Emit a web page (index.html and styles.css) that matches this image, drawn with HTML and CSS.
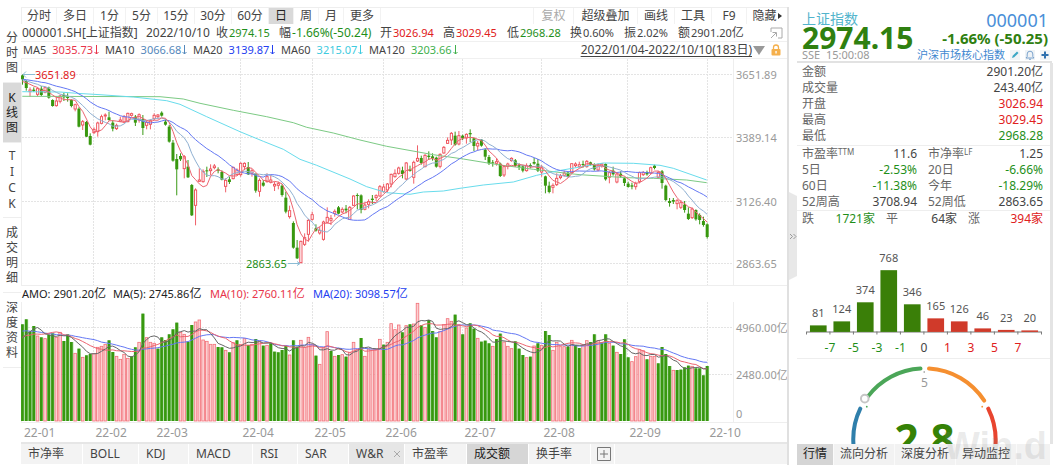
FILE: index.html
```html
<!DOCTYPE html>
<html lang="zh-CN">
<head>
<meta charset="utf-8">
<meta name="viewport" content="width=device-width, initial-scale=1">
<title>上证指数 000001.SH</title>
<link rel="stylesheet" href="styles.css">
</head>
<body>
<div class="app">
  <nav class="views">
    <button>分<br>时<br>图</button>
    <button class="on">K<br>线<br>图</button>
    <button class="tick">T<br>I<br>C<br>K</button>
    <button>成<br>交<br>明<br>细</button>
    <button>深<br>度<br>资<br>料</button>
  </nav>

  <main class="chart">
    <div class="toolbar">
      <button class="w35">分时</button><button class="w37">多日</button><button class="w32">1分</button><button class="w32">5分</button><button class="w37">15分</button><button class="w37">30分</button><button class="w37">60分</button><button class="w25 on">日</button><button class="w25">周</button><button class="w25">月</button><button class="w37">更多</button>
      <span class="spacer"></span>
      <button class="w40 off">复权</button><button class="w64">超级叠加</button><button class="w37">画线</button><button class="w37">工具</button><button class="w35">F9</button><button class="w40 hide">隐藏<i class="caret"></i></button>
    </div>

    <div class="quote">
      <span>000001.SH[上证指数]</span>
      <span>2022/10/10</span>
      <span>收<b class="dn">2974.15</b></span>
      <span>幅<b class="dn wide">-1.66%(-50.24)</b></span>
      <span>开<b class="up">3026.94</b></span>
      <span>高<b class="up">3029.45</b></span>
      <span>低<b class="dn">2968.28</b></span>
      <span>换<b>0.60%</b></span>
      <span>振<b>2.02%</b></span>
      <span>额<b>2901.20</b>亿</span>
      <button class="pop" aria-label="弹出"><svg width="13" height="12" viewBox="0 0 13 12"><path d="M1 5V1h11v10H8M1 11l5-5M2.500 5.500H6.500V9.500" fill="none" stroke="#aaa"/></svg></button>
    </div>

    <div class="ma">
      <span class="c5"><b>MA5</b><b class="v">3035.73<svg class="arr" viewBox="0 0 5 10"><path d="M2.500 0V9M.5 7l2 2 2-2"/></svg></b></span>
      <span class="c10"><b>MA10</b><b class="v">3066.68<svg class="arr" viewBox="0 0 5 10"><path d="M2.500 0V9M.5 7l2 2 2-2"/></svg></b></span>
      <span class="c20"><b>MA20</b><b class="v">3139.87<svg class="arr" viewBox="0 0 5 10"><path d="M2.500 0V9M.5 7l2 2 2-2"/></svg></b></span>
      <span class="c60"><b>MA60</b><b class="v">3215.07<svg class="arr" viewBox="0 0 5 10"><path d="M2.500 0V9M.5 7l2 2 2-2"/></svg></b></span>
      <span class="c120"><b>MA120</b><b class="v">3203.66<svg class="arr" viewBox="0 0 5 10"><path d="M2.500 0V9M.5 7l2 2 2-2"/></svg></b></span>
      <a class="range" href="#">2022/01/04-2022/10/10(183日)</a>
      <i class="tri"></i>
      <svg class="lock" width="10" height="12" viewBox="0 0 10 12"><path d="M2.500 6V3.500a2.500 2.500 0 0 1 5 0V6" fill="none" stroke="#f5b04c" stroke-width="1.300"/><rect x="0.500" y="5" width="9" height="6.500" rx="1" fill="#f5b04c"/><rect x="4.400" y="7" width="1.300" height="2.500" fill="#fff"/></svg>
    </div>

    <svg class="pane" id="price" viewBox="21 59 766 226" role="img" aria-label="K线"></svg>

    <div class="amo">
      <span>AMO: 2901.20<i>亿</i></span>
      <span>MA(5): 2745.86<i>亿</i></span>
      <span class="red">MA(10): 2760.11<i>亿</i></span>
      <span class="blue">MA(20): 3098.57<i>亿</i></span>
    </div>

    <svg class="pane" id="volume" viewBox="21 302 766 140" role="img" aria-label="成交额"></svg>

    <div class="indicators">
      <button class="n62">市净率</button><button class="n56">BOLL</button><button class="n49">KDJ</button><button class="n64">MACD</button><button class="n45">RSI</button><button class="n51">SAR</button><button class="n56 soft">W&amp;R<svg width="8" height="8" viewBox="0 0 8 8"><path d="M1 1l6 6M7 1L1 7" stroke="#aaa"/></svg></button><button class="n62">市盈率</button><button class="n62 on">成交额</button><button class="n62">换手率</button><button class="add" aria-label="添加"><svg width="14" height="14" viewBox="0 0 14 14"><path d="M.5.5h13v13H.5zM7 3v8M3 7h8" fill="none" stroke="#777"/></svg></button>
    </div>
  </main>

  <div class="gutter"><button aria-label="收起"><svg width="8" height="88" viewBox="0 0 8 88"><path d="M0 0L8 4V84L0 88z" fill="#e8e8e8"/><path d="M1 42l2.500 2.500L1 47M4.500 42L7 44.500 4.500 47" fill="none" stroke="#999"/></svg></button></div>

  <aside class="side">
    <header class="head">
      <div class="names"><h1>上证指数</h1><strong class="last">2974.15</strong></div>
      <div class="codes"><span class="code">000001</span><strong class="chg">-1.66% (-50.25)</strong></div>
      <div class="meta">
        <span class="time">SSE&nbsp; 15:00:08</span>
        <a href="#">沪深市场核心指数</a>
        <button aria-label="编辑"><svg width="10" height="10" viewBox="0 0 10 10"><path d="M2 8l.7-2.200L7 1.500 8.500 3 4.200 7.300z" fill="#3aa6c4"/></svg></button>
        <button aria-label="提醒"><svg width="10" height="10" viewBox="0 0 10 10"><path d="M1 8h8L7.800 6.500V4a2.800 2.800 0 0 0-5.600 0v2.500zM4 9.300h2" fill="none" stroke="#6f9bc8" stroke-width="0.900"/></svg></button>
        <button aria-label="添加自选"><svg width="10" height="10" viewBox="0 0 10 10"><path d="M5 1.500v7M1.500 5h7" stroke="#2c6fae" stroke-width="2"/></svg></button>
      </div>
    </header>

    <div class="stats">
      <dl class="one">
        <dt>金额</dt><dd>2901.20亿</dd>
        <dt>成交量</dt><dd>243.40亿</dd>
        <dt>开盘</dt><dd class="up">3026.94</dd>
        <dt>最高</dt><dd class="up">3029.45</dd>
        <dt>最低</dt><dd class="dn">2968.28</dd>
      </dl>
      <dl class="two">
        <dt>市盈率<sup>TTM</sup></dt><dd>11.6</dd><dt>市净率<sup>LF</sup></dt><dd>1.25</dd>
        <dt>5日</dt><dd class="dn">-2.53%</dd><dt>20日</dt><dd class="dn">-6.66%</dd>
        <dt>60日</dt><dd class="dn">-11.38%</dd><dt>今年</dt><dd class="dn">-18.29%</dd>
        <dt>52周高</dt><dd>3708.94</dd><dt>52周低</dt><dd>2863.65</dd>
      </dl>
      <dl class="three">
        <dt>跌</dt><dd class="dn">1721家</dd><dt>平</dt><dd>64家</dd><dt>涨</dt><dd class="up">394家</dd>
      </dl>
      <svg class="pane" id="spread" viewBox="797 227 252 130" role="img" aria-label="涨跌分布"></svg>
      <svg class="pane gauge" viewBox="797 358 252 85" role="img" aria-label="评分 2.8">
        <g fill="none" stroke-width="4" stroke-linecap="round">
          <path d="M867.500 395.500A70.500 70.500 0 0 1 920 367.500" stroke="#4ba658"/>
          <path d="M928.500 367.500A70.500 70.500 0 0 1 983.500 399.500" stroke="#f58f30"/>
          <path d="M987.500 407.500A70.500 70.500 0 0 1 994.500 446" stroke="#e8452f"/>
          <path d="M860 407.500A70.500 70.500 0 0 0 853.500 446" stroke="#2f7fab"/>
        </g>
        <circle cx="864.500" cy="397.500" r="3.800" fill="#fff" stroke="#c6c6c6" stroke-width="2"/>
        <circle cx="866.500" cy="405.500" r="0.900" fill="#4ba658"/><circle cx="981.500" cy="405.500" r="0.900" fill="#f58f30"/><circle cx="923.700" cy="371" r="0.800" fill="#888"/>
        <text x="924" y="386" class="mark">5</text>
        <text x="924" y="454" class="score">2.8</text>
      </svg>
    </div>
    <div class="sidetabs"><button class="on">行情</button><button>流向分析</button><button>深度分析</button><button>异动监控</button></div>
    <div class="watermark">Win.d</div>
  </aside>
</div>
<script src="chart.js"></script>
</body>
</html>
```
FILE: styles.css
```css
* { box-sizing: border-box; }
body { margin: 0; background: #fff; color: #444; font: 12px/16px "Noto Sans", "Noto Sans CJK SC", sans-serif; }
button { margin: 0; padding: 0; border: 0; background: none; color: inherit; font: inherit; white-space: nowrap; }
b, i { font-weight: normal; font-style: normal; }
svg { display: block; }
.up { color: #e02020; }
.dn { color: #1f8f1a; }

.app { display: flex; padding: 7px 4px 0 0; }

.views { flex: none; width: 21px; padding: 16px 0 0 3px; display: flex; flex-direction: column; }
.views button { line-height: 15px; padding: 7px 0; border-bottom: 1px solid #eee; }
.views button.on { background: #d9d9d9; color: #222; }
.views .tick { line-height: 16px; padding: 5px 0; }

.chart { flex: 1; min-width: 0; overflow: hidden; }
.toolbar { display: flex; height: 17px; border-top: 1px solid #eee; border-left: 1px solid #eee; line-height: 16px; }
.toolbar button { border-right: 1px solid #f2f2f2; }
.toolbar .on { background: #d9d9d9; color: #222; }
.toolbar .off { color: #aaa; }
.toolbar .hide { border: 0; display: flex; align-items: center; justify-content: center; gap: 1px; }
.caret { border: 3px solid transparent; border-left: 4px solid #333; border-right: 0; }
.spacer { flex: 1; border-right: 1px solid #f2f2f2; }
.w25 { width: 25px; } .w32 { width: 32px; } .w35 { width: 35px; } .w37 { width: 37px; }
.w40 { width: 40px; } .w64 { width: 64px; }

.quote { display: grid; grid-template-columns: 124px 70px 63px 101px 63px 64px 63px 54px 54px 1fr 17px; height: 18px; padding-left: 1px; line-height: 17px; border-bottom: 1px solid #f0f0f0; white-space: nowrap; }
.quote b { font-size: 11px; margin-left: 1px; }
.quote .wide { font-size: 12px; }
.pop { display: flex; align-items: center; }

.ma { display: flex; align-items: center; height: 17px; padding: 0 6px 0 2px; border-bottom: 1px solid #f0f0f0; font-size: 11px; white-space: nowrap; }
.ma span { display: flex; gap: 6px; width: 88px; }
.ma .c5 { width: 82px; }
.ma .c120 { width: 102px; }
.v { display: flex; align-items: center; gap: 1px; }
.arr { width: 5px; height: 10px; fill: none; stroke: currentColor; }
.c5 .v { color: #e8344a; } .c10 .v { color: #5588bb; } .c20 .v { color: #2340f0; }
.c60 .v { color: #40cbe0; } .c120 .v { color: #42b14e; }
.range { margin-left: auto; font-size: 12px; color: #444; text-underline-offset: 2px; }
.tri { border: 6px solid transparent; border-top: 9px solid #999; border-bottom: 0; margin: 0 6px 0 1px; }

.pane { width: 100%; height: auto; overflow: hidden; }
.pane text { font-size: 11px; }
.axis { fill: #999; }
.pane .date { fill: #999; font-size: 12px; }
.grid { fill: none; stroke: #e4e4e4; stroke-dasharray: 2 1; }
.edge { fill: none; stroke: #eee; }
.line { fill: none; stroke-width: 1; }

.amo { display: grid; grid-template-columns: 91px 97px 103px 1fr; height: 17px; padding-left: 1px; border-top: 1px solid #eee; font-size: 11px; color: #222; white-space: nowrap; }
.amo i { font-size: 12px; }
.amo .red { color: #e8344a; }
.amo .blue { color: #2340f0; }

.indicators { display: flex; height: 22px; border-top: 2px solid #e6e6e6; background: #f3f3f3; }
.indicators button { padding-left: 7px; border-right: 1px solid #fff; text-align: left; }
.indicators .on { background: #d6d6d6; color: #222; }
.indicators .soft { display: flex; align-items: center; gap: 10px; background: #e6e6e6; }
.n45 { width: 45px; } .n49 { width: 50px; } .n51 { width: 51px; } .n56 { width: 56px; }
.n62 { width: 62px; } .n64 { width: 64px; }
.indicators .add { width: 24px; padding-left: 6px; }

.gutter { flex: none; width: 10px; border-left: 2px solid #e0e0e0; display: flex; align-items: center; }

.side { flex: none; width: 256px; position: relative; padding-top: 4px; }
.head { display: grid; grid-template-columns: 1fr auto; padding: 0 2px 0 5px; border-bottom: 2px solid #e2e2e2; margin-right: 1px; }
h1 { margin: 0; font-size: 14px; line-height: 16px; font-weight: normal; color: #52b4cc; }
.last { display: block; font-size: 30px; line-height: 22px; color: #2f8010; }
.codes { text-align: right; padding-right: 2px; }
.code { display: block; font-size: 18px; line-height: 18px; color: #4a8fd8; }
.chg { display: block; font-size: 15px; line-height: 18px; color: #2f8010; }
.meta { grid-column: 1 / -1; display: flex; align-items: center; height: 12px; font-size: 11px; line-height: 12px; color: #999; }
.meta .time { flex: 1; }
.meta a { color: #3f88d0; text-decoration: none; }
.meta button { margin-left: 5px; background: #eff3f6; }

.stats { border-right: 3px solid #e4e4e4; padding-top: 1px; }
.stats dl { display: grid; margin: 0; padding: 0 7px 0 5px; border-bottom: 1px solid #eee; }
.stats dt { color: #666; white-space: nowrap; }
.stats dd { margin: 0; text-align: right; white-space: nowrap; }
.stats .one { grid-template-columns: 1fr 1fr; padding-bottom: 1px; }
.stats .two { grid-template-columns: 60px 55px 71px 1fr; }
.stats .two dt:nth-of-type(even) { padding-left: 11px; }
.stats .three { grid-template-columns: 24px 49px 37px 45px 35px 1fr; border: 0; }
.stats .three dt:nth-of-type(n+2) { padding-left: 11px; }
sup { font-size: 8px; line-height: 8px; vertical-align: 3px; }
.gauge { border-top: 1px solid #eee; }
.pane .mark { fill: #999; font-size: 12px; text-anchor: middle; }
.pane .score { fill: #358206; font-size: 42px; font-weight: bold; text-anchor: middle; }
.mid { text-anchor: middle; fill: #555; }
.pane .tickn { font-size: 12px; text-anchor: middle; }

.sidetabs { display: flex; height: 21px; background: #f2f2f2; margin-right: 3px; }
.sidetabs button { width: 61px; border-right: 1px solid #fafafa; }
.sidetabs .on { width: 37px; background: #d5d5d5; color: #222; }
.watermark { position: absolute; right: 6px; bottom: 0; font: bold 38px/38px "Liberation Sans", sans-serif; color: rgba(130, 130, 130, 0.16); pointer-events: none; }
```
FILE: chart.js
```js
const STEP = 3.762;
const X0 = 22.5;
const xAt = i => X0 + i * STEP;

// direction, body top, body bottom, high, low (thirds of a unit)
const candles = `
g226,238,223,254 g243,264,240,272 r270,275,262,290 g269,273,262,276 r266,283,262,289 g266,285,258,288 r263,277,260,280 g263,293,260,296 g300,318,298,320 r303,317,288,320
r288,304,284,310 g285,292,278,303 g291,294,280,305 g300,318,298,322 r314,327,311,334 g326,380,322,382 r365,375,360,390 g366,410,363,411 g408,434,400,436 r388,398,382,402
r369,395,365,410 r350,370,344,373 r345,348,340,361 g352,360,335,362 g368,386,361,394 r376,386,371,390 r360,364,350,366 r350,366,345,369 r340,365,338,367 r341,346,338,350
g350,368,345,378 r344,360,340,368 g357,384,345,405 r367,376,362,388 r362,373,358,388 r346,356,340,360 r345,350,342,358 g338,347,334,350 g365,374,358,377 g380,425,375,428
g428,482,420,485 g477,508,462,586 g468,478,460,483 r470,506,465,535 g500,532,480,534 g555,646,552,648 r570,616,565,676 r540,544,505,546 r514,545,508,548 g511,513,500,531
r507,512,493,525 r498,503,492,508 g508,512,502,520 g516,539,511,541 r541,559,535,577 g538,546,530,552 r502,536,500,538 r510,524,505,526 r490,524,487,530 r490,500,487,510
g501,523,486,525 r512,520,507,530 g522,572,520,578 r541,574,535,590 g548,557,540,560 r530,545,520,548 r540,546,525,550 r553,558,545,573 r551,556,545,568 g557,585,553,590
g593,635,575,640 r632,650,617,656 g669,743,664,746 g743,775,720,777 r724,788,722,790 r713,733,700,738 r661,703,657,725 r644,658,635,662 g685,692,673,695 r691,699,680,704
r666,718,662,722 r652,667,622,670 r655,661,645,675 r634,640,628,650 g622,641,618,643 r628,636,622,640 g626,631,615,640 r622,658,618,660 r588,616,586,618 g585,588,580,628
g586,630,583,640 r615,628,607,631 r605,613,598,625 g596,600,585,612 r587,593,583,603 r560,588,555,590 r561,575,552,578 r552,570,549,577 r523,552,521,562 r520,530,508,533
r504,520,500,524 g511,522,500,535 r489,537,486,541 g508,513,497,515 r487,532,482,551 r475,483,436,486 g474,489,467,494 r466,500,462,502 g467,471,454,480 g469,475,460,482
g473,500,470,503 r463,499,460,505 r442,459,438,461 r421,430,412,432 r400,420,396,435 g407,434,395,437 r407,432,393,436 g407,415,404,420 r403,414,400,431 g399,403,388,426
g415,438,413,453 r430,438,423,452 g419,437,417,440 g449,470,445,480 g471,490,465,495 g487,490,480,500 r485,490,475,497 g491,528,488,531 r500,525,495,531 r492,499,488,508
r475,482,472,485 g481,498,477,500 g496,500,490,510 g499,512,494,517 r498,512,490,515 g495,501,490,505 g486,491,474,494 g491,512,477,516 r504,516,495,530 g529,557,527,580
g557,576,545,580 r556,562,550,580 r535,554,520,558 r528,533,522,538 r519,526,512,530 g518,530,515,532 r491,518,490,520 r492,497,487,502 r494,499,485,503 g492,495,482,503
r484,500,480,503 g487,494,485,497 g495,508,490,512 r495,510,490,514 r492,498,489,503 g492,538,490,542 r518,532,514,550 g512,523,500,527 r522,546,519,550 g521,529,514,533
g535,549,530,558 g551,561,545,563 g556,560,548,568 r551,560,545,569 r518,544,515,550 r518,524,513,528 g516,523,512,527 r503,519,500,522 g497,504,494,508 r517,532,513,535
g514,549,510,566 g557,600,554,604 g603,609,594,620 g600,605,594,612 r602,611,597,628 r608,622,600,627 g614,630,603,638 g641,657,622,660 r627,653,622,657 g630,658,628,662
g645,660,640,673 g663,675,650,680 g673,711,670,716`.trim().split(/\s+/).map(s => [s[0], ...s.slice(1).split(',').map(n => n / 3)]);

const volumes = `
g133 g118 g155 g138 r168 g172 r176 g165 g160 r172 r157 g183 g163 g186 r220 g206 r232 g226 g222 r221
r202 r199 r193 g181 g216 r229 r238 r223 r235 g229 g202 r187 g101 r173 r187 r190 g206 g172 g180 g163
g148 g128 r157 r163 g185 g135 r126 r120 r180 r184 r193 r193 g201 g202 r211 g217 r188 g181 r193 r176
g195 r193 g177 r183 g197 r196 g190 g215 g217 g210 g198 r225 g181 g200 r181 r202 r172 r193 g227 r253
r203 r155 g213 r229 g225 r224 g230 r217 r187 r208 g174 r229 r207 r210 r210 r178 g194 r187 r131 r149
r135 g157 r137 g133 r132 r70 g136 r142 g120 g153 g172 r154 r134 r116 r124 g104 r134 g163 r144 g130
g146 r175 g185 g182 g190 r199 g177 g161 r186 r199 r206 g184 g206 g225 r233 g230 r198 g190 r196 g153
g165 r211 r187 r200 r200 g200 r181 g195 g204 r196 r182 g186 g163 r182 g187 g163 r190 g197 r217 g222
g178 g232 r245 r230 r209 r212 g238 r229 r229 g250 g201 g222 g258 r271 g270 g269 g262 g257 r259 g265
g265 g286 g258`.trim().split(/\s+/).map(s => [s[0], 280 + s.slice(1) / 3]);

// Simple moving average; "before" supplies the sessions left of the window.
function average(values, before, n) {
  const all = before.concat(values);
  return values.map((_, i) => {
    const end = before.length + i + 1;
    return all.slice(end - n, end).reduce((a, b) => a + b, 0) / n;
  });
}
const series = (ys, color) =>
  `<polyline class="line" stroke="${color}" points="${ys.map((y, i) => xAt(i).toFixed(1) + ',' + y.toFixed(1)).join(' ')}"/>`;
const thirds = (pts, color) =>
  `<polyline class="line" stroke="${color}" points="${pts.map(p => (p[0] / 3).toFixed(1) + ',' + (p[1] / 3).toFixed(1)).join(' ')}"/>`;

const months = [[93.5, '22-02'], [154.5, '22-03'], [240.5, '22-04'], [312.5, '22-05'], [383.5, '22-06'], [462.5, '22-07'], [541.5, '22-08'], [627.5, '22-09'], [707.5, '22-10']];
const verticals = (a, b) => months.map(m => `<path class="grid" d="M${m[0]} ${a}V${b}"/>`).join('') + `<path class="edge" d="M733.5 ${a}V${b}M21.5 ${a}V${b}"/>`;
const level = (y, text) => `<path class="grid" d="M22 ${y}H733"/><text class="axis" x="736" y="${y + 4}">${text}</text>`;

let p = verticals(59, 285) + level(74.5, '3651.89') + level(137.5, '3389.14') + level(201.5, '3126.40') + level(263.5, '2863.65');
candles.forEach(([c, top, bottom, high, low], i) => {
  const x = xAt(i);
  if (c === 'g') {
    p += `<path d="M${x} ${high}V${low}" stroke="#3a9a16"/><rect x="${x - 1.5}" y="${top}" width="3" height="${Math.max(1, bottom - top)}" fill="#38980f"/>`;
  } else {
    p += `<path d="M${x} ${high}V${top}M${x} ${bottom}V${low}" stroke="#f06068"/><rect x="${x - 1.1}" y="${top}" width="2.2" height="${Math.max(1, bottom - top)}" fill="#fff" stroke="#ee4a54" stroke-width="0.9"/>`;
  }
});
const closes = candles.map(c => c[0] === 'g' ? c[2] : c[1]);
const earlier = Array(15).fill(78.5).concat(Array(4).fill(82));
p += thirds([[67,289],[480,290],[550,297],[600,310],[700,331],[800,350],[880,368],[920,382],[1000,399],[1080,420],[1160,439],[1300,464],[1390,477],[1500,495],[1600,508],[1700,520],[1740,524],[1880,533],[1960,535],[2060,540],[2120,548]], '#7cca84');
p += thirds([[67,275],[180,276],[230,280],[300,284],[400,291],[500,302],[540,313],[620,350],[720,395],[790,424],[850,448],[900,478],[950,496],[1050,537],[1100,560],[1160,578],[1230,583],[1270,576],[1330,573],[1380,565],[1450,555],[1540,546],[1610,526],[1670,513],[1740,501],[1810,489],[1900,490],[1980,496],[2020,505],[2120,540]], '#68dcec');
p += series(average(closes, earlier, 20), '#6478f4');
p += series(average(closes, earlier, 10), '#8fb0d2');
p += series(average(closes, earlier, 5), '#ec6470');
p += `<path d="M35 74.500H23M26 71.500L23 74.500 26 77.500M288 263.500H300M297 261.500L300 263.500 297 265.500" fill="none" stroke="#8cbcd4"/>
<text x="35" y="79" fill="#e02020">3651.89</text><text x="246" y="268" fill="#1f8f1a">2863.65</text>`;
document.getElementById('price').innerHTML = p;

const BASE = 421;
let v = verticals(302, 422) + level(327.5, '4960.00亿') + level(374.5, '2480.00亿') + '<text class="axis" x="736" y="418">0</text><path class="edge" d="M21 422.500H787"/>';
volumes.forEach(([c, top], i) => {
  const x = xAt(i);
  if (c === 'g') {
    v += `<rect x="${x - 1.5}" y="${top}" width="3.4" height="${BASE - top}" fill="#8dcc80"/><rect x="${x - 1.4}" y="${top}" width="2.6" height="${BASE - top}" fill="#38980f"/>`;
  } else {
    v += `<rect x="${x - 1.3}" y="${top}" width="2.6" height="${BASE - top}" fill="#fbd0d2" stroke="#f27078" stroke-width="0.8"/>`;
  }
});
const tops = volumes.map(d => d[1]);
const past = Array(10).fill(325).concat(Array(5).fill(336), Array(4).fill(342));
v += series(average(tops, past, 20), '#6478f4') + series(average(tops, past, 10), '#ec6470') + series(average(tops, past, 5), '#666');
v += '<text class="date" x="24" y="437">22-01</text>' + months.map(m => `<text class="date" x="${m[0] + 2}" y="437">${m[1]}</text>`).join('');
document.getElementById('volume').innerHTML = v;

const buckets = [[81, 325], [124, 321], [374, 302], [768, 270], [346, 304], [165, 318], [126, 321], [46, 328], [23, 329.5], [20, 330]];
const bounds = [-7, -5, -3, -1, 0, 1, 3, 5, 7];
let s = '<path d="M806.500 334V331.500H1040.500V334" fill="none" stroke="#777"/>';
buckets.forEach(([n, y], i) => {
  const x = 818.2 + i * 23.4;
  s += `<rect x="${x - 8.3}" y="${y}" width="16.600" height="${331.5 - y}" fill="${i < 5 ? '#3a7f08' : '#d03a2a'}"/><text class="mid" x="${x}" y="${y - 8}">${n}</text>`;
});
bounds.forEach((n, i) => {
  const x = 829.8 + i * 23.4;
  s += `<path d="M${x} 331V334" stroke="#777"/><text class="tickn" x="${x}" y="352" fill="${n < 0 ? '#1f8f1a' : n > 0 ? '#e02020' : '#444'}">${n}</text>`;
});
document.getElementById('spread').innerHTML = s;
```
